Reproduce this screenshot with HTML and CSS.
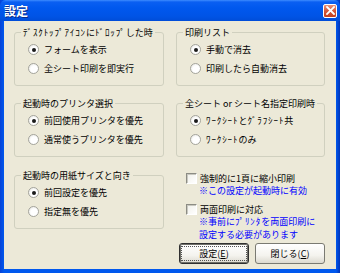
FILE: index.html
```html
<!DOCTYPE html>
<html lang="ja">
<head>
<meta charset="utf-8">
<title>設定</title>
<link rel="stylesheet" href="styles.css">
</head>
<body>
<div class="window">
  <div class="titlebar">
    <span class="title">設定</span>
    <span class="close">
      <svg width="9" height="9" viewBox="0 0 9 9"><path d="M1 1L8 8M8 1L1 8" stroke="#fff" stroke-width="1.8" stroke-linecap="square"/></svg>
    </span>
  </div>
  <div class="client">
    <div class="col">
      <fieldset class="group">
        <legend><span class="hw">ﾃﾞｽｸﾄｯﾌﾟｱｲｺﾝ</span>に<span class="hw">ﾄﾞﾛｯﾌﾟ</span>した時</legend>
        <div class="opt"><span class="radio on"></span>フォームを表示</div>
        <div class="opt"><span class="radio"></span>全シート印刷を即実行</div>
      </fieldset>
      <fieldset class="group mid">
        <legend>起動時のプリンタ選択</legend>
        <div class="opt"><span class="radio on"></span>前回使用プリンタを優先</div>
        <div class="opt"><span class="radio"></span>通常使うプリンタを優先</div>
      </fieldset>
      <fieldset class="group last">
        <legend>起動時の用紙サイズと向き</legend>
        <div class="opt"><span class="radio on"></span>前回設定を優先</div>
        <div class="opt"><span class="radio"></span>指定無を優先</div>
      </fieldset>
    </div>
    <div class="col">
      <fieldset class="group">
        <legend>印刷リスト</legend>
        <div class="opt"><span class="radio on"></span>手動で消去</div>
        <div class="opt"><span class="radio"></span>印刷したら自動消去</div>
      </fieldset>
      <fieldset class="group mid">
        <legend>全シート or シート名指定印刷時</legend>
        <div class="opt"><span class="radio on"></span><span class="hw">ﾜｰｸｼｰﾄ</span>と<span class="hw">ｸﾞﾗﾌｼｰﾄ</span>共</div>
        <div class="opt"><span class="radio"></span><span class="hw">ﾜｰｸｼｰﾄ</span>のみ</div>
      </fieldset>
      <div class="checks">
        <div class="chk"><span class="box"></span>強制的に1頁に縮小印刷</div>
        <div class="note">※この設定が起動時に有効</div>
        <div class="chk second"><span class="box"></span>両面印刷に対応</div>
        <div class="note">※事前に<span class="hw">ﾌﾟﾘﾝﾀ</span>を両面印刷に</div>
        <div class="note">設定する必要があります</div>
      </div>
      <div class="buttons">
        <button class="btn default"><span class="focus">設定(<u>E</u>)</span></button>
        <button class="btn">閉じる(<u>C</u>)</button>
      </div>
    </div>
  </div>
</div>
</body>
</html>
```

FILE: styles.css
```css
html, body {
  margin: 0;
  padding: 0;
  background: #ffffff;
}

body {
  font-family: "Noto Sans CJK JP", "Noto Sans", sans-serif;
  font-size: 9px;
  color: #000;
}

.hw {
  letter-spacing: 0.9px;
}

.window {
  width: 340px;
  height: 273px;
  display: flex;
  flex-direction: column;
  background: linear-gradient(90deg, #0842d6 0, #0058ee 4px, #0058ee 336px, #0033b8 340px);
  box-sizing: border-box;
}

.titlebar {
  height: 21px;
  flex: none;
  display: flex;
  align-items: center;
  justify-content: space-between;
  padding: 0 3px 0 4px;
  background: linear-gradient(180deg, #3d8cff 0, #0a5ff2 2px, #0058ee 8px, #0054e6 16px, #004dd8 21px);
  border-radius: 6px 6px 0 0;
}

.title {
  color: #fff;
  font-weight: bold;
  font-size: 12px;
  line-height: 14px;
  text-shadow: 1px 1px 0 #0a2a8a;
}

.close {
  width: 14px;
  height: 14px;
  box-sizing: border-box;
  border: 1px solid #fff;
  border-radius: 2px;
  background: linear-gradient(180deg, #e8927a 0, #d4573a 50%, #c2401f 100%);
  display: flex;
  align-items: center;
  justify-content: center;
}

.close svg {
  display: block;
}

.client {
  flex: 1;
  margin: 0 4px 4px 4px;
  background: #ece9d8;
  padding: 6px 11px 0 10px;
  display: flex;
  gap: 12px;
}

.col {
  display: flex;
  flex-direction: column;
}

.col:first-child {
  width: 150px;
}

.col:last-child {
  width: 149px;
}

.group {
  margin: 0;
  padding: 2px 0 7px 13px;
  border: 1px solid #d0d0bf;
  border-radius: 3px;
  min-width: 0;
}

.group legend {
  padding: 0 2px;
  margin-left: -7px;
  line-height: 11px;
  white-space: nowrap;
}

.group.mid {
  margin-top: 12px;
}

.group.last {
  margin-top: 13px;
}

.opt {
  height: 19px;
  display: flex;
  align-items: center;
  white-space: nowrap;
}

.radio {
  width: 11px;
  height: 11px;
  box-sizing: border-box;
  border: 1px solid #a4a49c;
  border-radius: 50%;
  background: radial-gradient(circle at 60% 60%, #ffffff 0, #ffffff 45%, #e0e0da 100%);
  margin-right: 5px;
  flex: none;
  position: relative;
}

.radio.on::after {
  content: "";
  position: absolute;
  left: 2.5px;
  top: 2.5px;
  width: 4px;
  height: 4px;
  border-radius: 50%;
  background: #1a1a1a;
}

.checks {
  margin-top: 14px;
  padding-left: 10px;
}

.chk {
  height: 14px;
  display: flex;
  align-items: center;
  white-space: nowrap;
}

.chk.second {
  margin-top: 5px;
}

.box {
  width: 11px;
  height: 11px;
  box-sizing: border-box;
  border-top: 1px solid #8c8c84;
  border-left: 1px solid #8c8c84;
  border-right: 1px solid #ffffff;
  border-bottom: 1px solid #ffffff;
  background: linear-gradient(135deg, #f0f0ea, #ffffff);
  box-shadow: inset 1px 1px 0 #c8c8c0;
  margin-right: 3px;
  flex: none;
}

.note {
  color: #0000ff;
  padding-left: 13px;
  line-height: 12px;
  white-space: nowrap;
}

.note + .note {
  line-height: 13px;
}

.buttons {
  margin-top: 2px;
  display: flex;
  gap: 6px;
  margin-left: 3px;
}

.btn {
  width: 74px;
  height: 21px;
  box-sizing: border-box;
  font: inherit;
  font-size: 9px;
  color: #000;
  border: 1px solid #7a7a72;
  border-radius: 3px;
  background: linear-gradient(180deg, #ffffff 0, #f4f3ee 60%, #dcdad0 100%);
  padding: 0;
  display: flex;
  align-items: center;
  justify-content: center;
}

.btn.default {
  border: 1px solid #303030;
  box-shadow: inset 0 0 0 1px #6f6f68;
}

.focus {
  display: flex;
  align-items: center;
  justify-content: center;
  width: 64px;
  height: 13px;
  border: 1px dotted #555;
}

u {
  text-decoration: underline;
}
```
